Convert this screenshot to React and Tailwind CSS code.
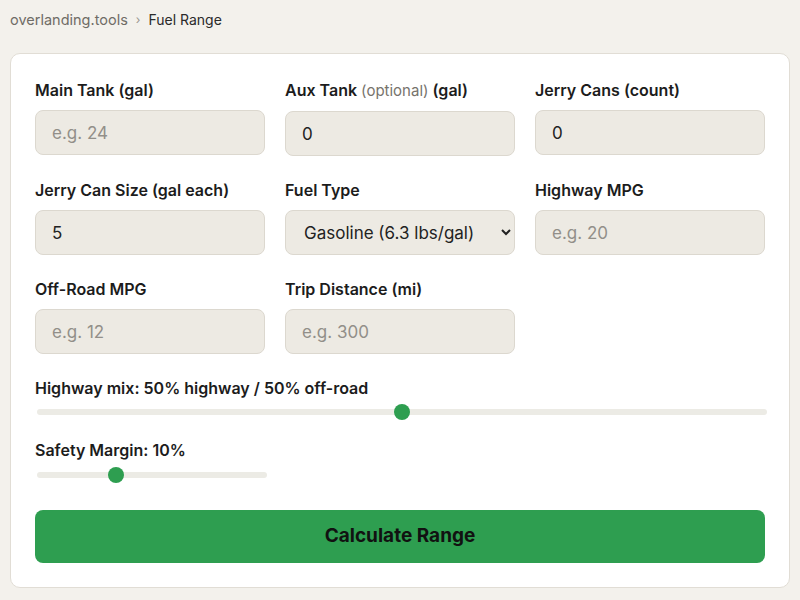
import { useState } from 'react';

const inputCls =
  'w-full h-[45px] rounded-lg border border-[#dcd8cf] bg-[#edeae3] px-4 text-[17px] text-[#222] placeholder:text-[#928f89] outline-none';

const rangeCls =
  'block w-full ml-[2px] h-1.5 appearance-none rounded-full bg-[#ecebe5] outline-none [&::-webkit-slider-thumb]:appearance-none [&::-webkit-slider-thumb]:h-4 [&::-webkit-slider-thumb]:w-4 [&::-webkit-slider-thumb]:rounded-full [&::-webkit-slider-thumb]:bg-[#2e9e50] [&::-webkit-slider-thumb]:border-0';

function Field({ label, children }) {
  return (
    <div className="flex flex-col">
      <label className="mb-2 text-[16px] font-semibold leading-6 text-[#1c1c1c]">{label}</label>
      {children}
    </div>
  );
}

export default function App() {
  const [mix, setMix] = useState(50);
  const [margin, setMargin] = useState(10);

  return (
    <div className="min-h-screen bg-[#f3f1ec] px-[10px] pt-[10px] font-['Inter',sans-serif]">
      <nav className="flex items-center gap-2 text-[14px] leading-5">
        <span className="text-[#6f6c66] text-[14.5px]">overlanding.tools</span>
        <span className="text-[#9a968f] text-[12px]">›</span>
        <span className="text-[#2a2a2a]">Fuel Range</span>
      </nav>

      <div className="mt-[23px] rounded-[10px] border border-[#e1ddd5] bg-white p-6">
        <div className="grid grid-cols-3 gap-x-5 gap-y-[22px]">
          <Field label="Main Tank (gal)">
            <input className={inputCls} placeholder="e.g. 24" />
          </Field>
          <Field
            label={
              <>
                Aux Tank <span className="font-normal text-[15px] text-[#77736c]">(optional)</span> (gal)
              </>
            }
          >
            <input className={inputCls} defaultValue="0" />
          </Field>
          <Field label="Jerry Cans (count)">
            <input className={inputCls} defaultValue="0" />
          </Field>

          <Field label="Jerry Can Size (gal each)">
            <input className={inputCls} defaultValue="5" />
          </Field>
          <Field label="Fuel Type">
            <select className={inputCls + ' pl-[14px] pr-2'} defaultValue="gas">
              <option value="gas">Gasoline (6.3 lbs/gal)</option>
              <option value="diesel">Diesel (7.1 lbs/gal)</option>
            </select>
          </Field>
          <Field label="Highway MPG">
            <input className={inputCls} placeholder="e.g. 20" />
          </Field>

          <Field label="Off-Road MPG">
            <input className={inputCls} placeholder="e.g. 12" />
          </Field>
          <Field label="Trip Distance (mi)">
            <input className={inputCls} placeholder="e.g. 300" />
          </Field>
        </div>

        <div className="mt-[22px]">
          <label className="block text-[16px] font-semibold leading-6 text-[#1c1c1c]">
            Highway mix: {mix}% highway / {100 - mix}% off-road
          </label>
          <input
            type="range"
            min="0"
            max="100"
            value={mix}
            onChange={(e) => setMix(Number(e.target.value))}
            className={rangeCls + ' mt-[9px]'}
          />
        </div>

        <div className="mt-[23px]">
          <label className="block text-[16px] font-semibold leading-6 text-[#1c1c1c]">
            Safety Margin: {margin}%
          </label>
          <div className="w-[230px]">
            <input
              type="range"
              min="0"
              max="30"
              value={margin}
              onChange={(e) => setMargin(Number(e.target.value))}
              className={rangeCls + ' mt-[10px]'}
            />
          </div>
        </div>

        <button className="mt-8 h-[53px] w-full rounded-lg bg-[#2e9e50] text-[19px] font-bold text-[#111]">
          Calculate Range
        </button>
      </div>
    </div>
  );
}
